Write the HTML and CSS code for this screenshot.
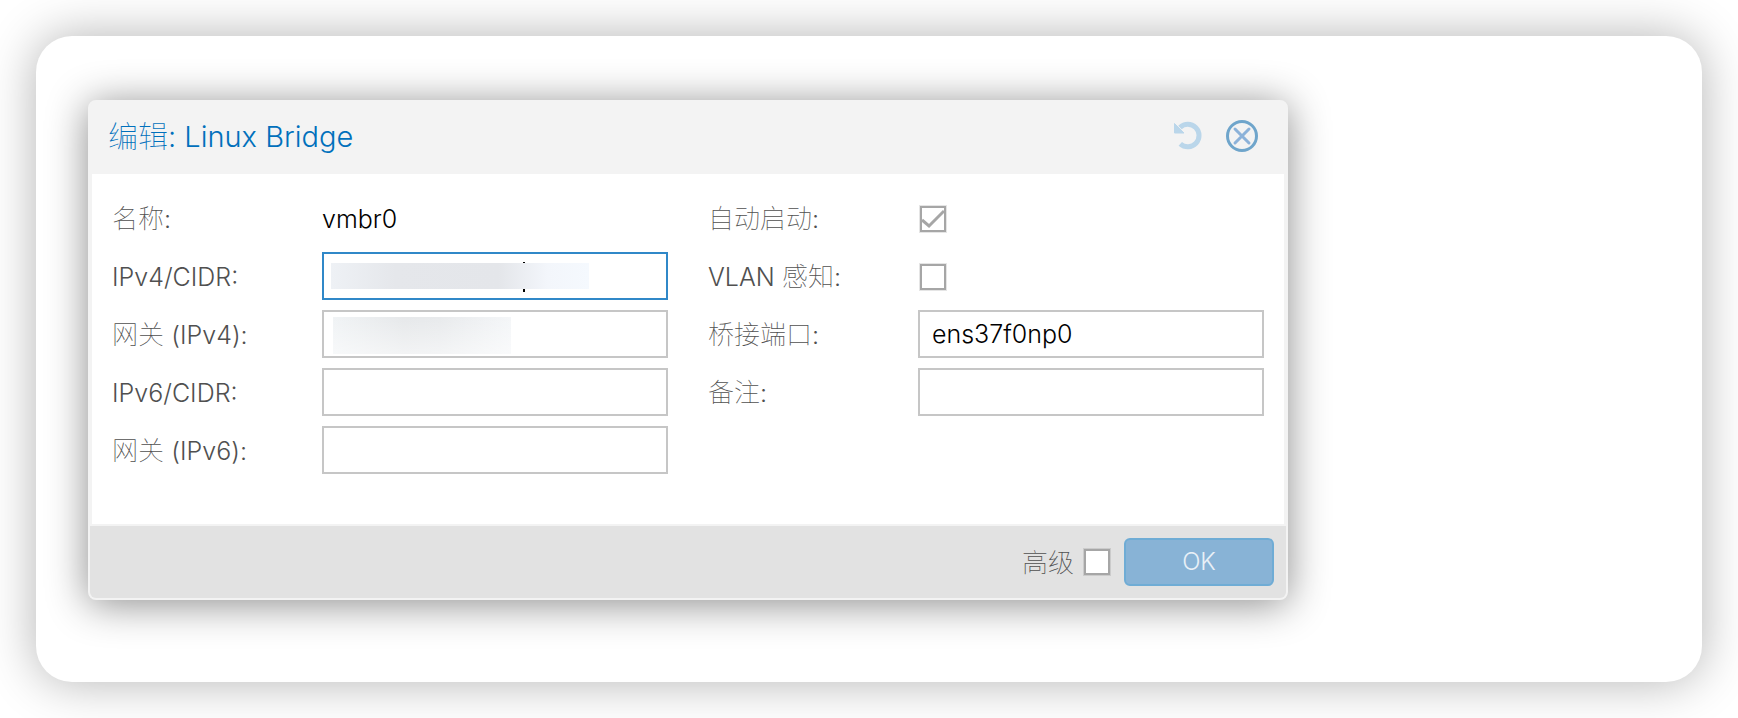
FILE: index.html
```html
<!DOCTYPE html>
<html lang="zh-CN">
<head>
  <meta charset="UTF-8" />
  <meta name="viewport" content="width=device-width, initial-scale=1.0"/>
  <title>编辑: Linux Bridge</title>
  <link rel="stylesheet" href="styles.css">
</head>
<body>
  <div class="card">
    <form class="window">
      <div class="header">
        <h2>编辑<span class="latin">: Linux Bridge</span></h2>
        <button type="button" class="tool" aria-label="Reset">
          <svg width="32" height="32" viewBox="0 0 32 32">
            <path d="M8 7.500A11.200 11.200 0 1 1 8.300 23.800" fill="none" stroke="#bad6ea" stroke-width="5" />
            <path d="M2.500 3.500v9.500h9.500z" fill="#bad6ea" stroke="#bad6ea" stroke-linejoin="round" />
          </svg>
        </button>
        <button type="button" class="tool" aria-label="Close">
          <svg width="32" height="32" viewBox="0 0 32 32" fill="none">
            <circle cx="16" cy="16" r="14.500" stroke="#6fa5cb" stroke-width="3" />
            <path d="M9 9l14 14M23 9L9 23" stroke="#8cb2d9" stroke-width="3" stroke-linecap="round" />
          </svg>
        </button>
      </div>

      <div class="content">
        <div class="column">
          <div class="row">
            <span class="label">名称<span class="latin">:</span></span>
            <span class="label value latin">vmbr0</span>
          </div>
          <div class="row">
            <label for="ipv4" class="label latin">IPv4/CIDR:</label>
            <div class="field">
              <input type="text" id="ipv4" class="active" />
              <span class="caret"></span>
              <span class="mask mask-cidr"></span>
            </div>
          </div>
          <div class="row">
            <label for="gateway4" class="label">网关 <span class="latin">(IPv4):</span></label>
            <div class="field">
              <input type="text" id="gateway4" />
              <span class="mask mask-gateway"></span>
            </div>
          </div>
          <div class="row">
            <label for="ipv6" class="label latin">IPv6/CIDR:</label>
            <div class="field"><input type="text" id="ipv6" /></div>
          </div>
          <div class="row">
            <label for="gateway6" class="label">网关 <span class="latin">(IPv6):</span></label>
            <div class="field"><input type="text" id="gateway6" /></div>
          </div>
        </div>

        <div class="column">
          <div class="row">
            <label for="autostart" class="label">自动启动<span class="latin">:</span></label>
            <div class="field check"><input type="checkbox" id="autostart" checked /></div>
          </div>
          <div class="row">
            <label for="vlan" class="label"><span class="latin">VLAN</span> 感知<span class="latin">:</span></label>
            <div class="field check"><input type="checkbox" id="vlan" /></div>
          </div>
          <div class="row">
            <label for="ports" class="label">桥接端口<span class="latin">:</span></label>
            <div class="field"><input type="text" id="ports" value="ens37f0np0" /></div>
          </div>
          <div class="row">
            <label for="comment" class="label">备注<span class="latin">:</span></label>
            <div class="field"><input type="text" id="comment" /></div>
          </div>
        </div>
      </div>

      <div class="footer">
        <label for="advanced" class="label">高级</label>
        <input type="checkbox" id="advanced" />
        <button type="button" class="ok">OK</button>
      </div>
    </form>
  </div>
</body>
</html>
```

FILE: styles.css
```css
* {
  box-sizing: border-box;
}
body {
  margin: 0;
  padding: 36px;
  background: #fff;
  font-family: Inter, "Noto Sans CJK SC", sans-serif;
  font-size: 26px;
  font-weight: 100;
  line-height: 32px;
  color: #505050;
}
.card {
  padding: 64px 52px 82px;
  border-radius: 36px;
  background: #fff;
  box-shadow: 0 0 50px rgba(0,0,0,0.3);
}
.window {
  max-width: 1200px;
  border: 2px solid #f3f3f3;
  border-radius: 8px;
  background: #f3f3f3;
  box-shadow: 0 4px 40px rgba(0,0,0,0.46);
}
.header {
  display: flex;
  align-items: center;
  gap: 22px;
  height: 72px;
  padding: 0 28px 4px 18px;
}
h2 {
  flex: 1;
  margin: 0;
  font-size: 30px;
  font-weight: 100;
  color: #0070bc;
}
.tool {
  width: 32px;
  height: 32px;
  padding: 0;
  border: none;
  background: none;
  cursor: pointer;
}
.tool svg {
  display: block;
}
.content {
  display: grid;
  grid-template-columns: 1fr 1fr;
  gap: 40px;
  margin: 0 2px 2px;
  padding: 20px 20px 50px;
  background: #fff;
}
.column {
  display: flex;
  flex-direction: column;
  gap: 10px;
}
.row {
  display: grid;
  grid-template-columns: 210px 1fr;
  align-items: center;
  height: 48px;
}
.label {
  padding-top: 2px;
}
.latin {
  font-size: 25px;
  font-weight: 300;
}
h2 .latin {
  font-size: 29px;
}
.value {
  color: #000;
}
.field {
  position: relative;
  display: flex;
}
.check {
  padding: 2px 0 0 2px;
}
input[type="text"] {
  width: 100%;
  height: 48px;
  padding: 0 12px;
  border: 2px solid #c6c6c6;
  border-radius: 0;
  outline: none;
  background: #fff;
  font: inherit;
  font-size: 25px;
  font-weight: 300;
  color: #000;
}
input[type="text"].active {
  border-color: #3088c8;
}
input[type="checkbox"] {
  appearance: none;
  width: 26px;
  height: 26px;
  margin: 0;
  border: 2px solid #a6a6a6;
  background: #fff;
  box-shadow: 0 0 0 1px rgba(0,0,0,0.1);
}
input[type="checkbox"]:checked {
  background: url("data:image/svg+xml,%3Csvg xmlns='http://www.w3.org/2000/svg' viewBox='0 0 22 22'%3E%3Cpath d='M0 12l7 6L22 3' fill='none' stroke='%23a6a6a6' stroke-width='3'/%3E%3C/svg%3E") center / 22px 22px no-repeat;
}
/* hidden addresses */
.mask {
  position: absolute;
}
.mask-cidr {
  left: 9px;
  top: 11px;
  width: 258px;
  height: 26px;
  background: linear-gradient(90deg, #eef1f5, #e5e7eb 25%, #e4e6ea 65%, #f3f6fb 84%, #f5f9fe);
}
.mask-gateway {
  left: 11px;
  top: 7px;
  width: 178px;
  height: 37px;
  background: linear-gradient(rgba(255,255,255,0), rgba(255,255,255,0.5)), linear-gradient(90deg, #f0f3f5, #e6e8ea 40%, #e8eaec 60%, #f4f6f8);
}
.caret {
  position: absolute;
  left: 201px;
  top: 10px;
  width: 2px;
  height: 30px;
  background: #000;
}
.footer {
  display: flex;
  justify-content: flex-end;
  align-items: center;
  gap: 10px;
  height: 72px;
  padding: 0 12px;
  border-radius: 0 0 6px 6px;
  background: #e2e2e2;
}
.ok {
  width: 150px;
  height: 48px;
  margin-left: 4px;
  border: 2px solid #6facd5;
  border-radius: 6px;
  background: #88b3d6;
  font: inherit;
  font-size: 24px;
  font-weight: 300;
  color: #e8f0f7;
  cursor: pointer;
}
```
